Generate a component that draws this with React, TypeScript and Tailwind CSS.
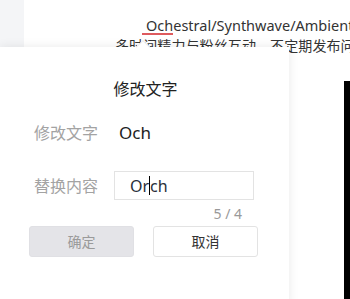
import React from 'react';

const font = { fontFamily: '"Noto Sans", "Noto Sans CJK SC", sans-serif' };

const App: React.FC = () => {
  return (
    <div className="relative w-[350px] h-[299px] overflow-hidden bg-white text-[#333]" style={font}>
      {/* page behind the popup */}
      <div className="flex h-full">
        <div className="w-[24px] h-[47px] bg-[#f4f5f7] shrink-0" />
        <div className="flex-1 relative">
          <div className="pl-[122px] pt-[14px] whitespace-nowrap text-[14.5px] leading-[22px]">
            Ochestral/Synthwave/Ambient
          </div>
          <div className="pl-[91px] whitespace-nowrap text-[14px] leading-[20px] tracking-[0.1px]">
            多时间精力与粉丝互动，不定期发布问题
          </div>
          <span className="absolute left-[118px] top-[33px] w-[31px] h-[2px] bg-[#de5a5e]" />
        </div>
      </div>
      <div className="absolute right-0 top-[81px] w-[6px] h-[220px] bg-black" />

      {/* popup */}
      <div className="absolute left-0 top-[47px] w-[289px] h-[260px] bg-white shadow-[0_0_10px_rgba(0,0,0,0.09)]">
        <span className="absolute left-[138px] top-[-5px] w-[10px] h-[10px] rotate-45 bg-white border-l border-t border-[#eceef1]" />
        <div className="flex flex-col pt-[30px]">
          <div className="text-center pl-[2px] text-[16px] leading-[24px] text-[#222]">修改文字</div>
          <div className="flex items-center h-[30px] mt-[17px] pl-[34px]">
            <span className="w-[64px] text-[16px] text-[#a3a3a3]">修改文字</span>
            <span className="ml-[21px] text-[17px] text-[#222]">Och</span>
          </div>
          <div className="flex items-center mt-[23px] pl-[34px]">
            <span className="w-[64px] text-[16px] text-[#a3a3a3]">替换内容</span>
            <div className="ml-[16px] w-[140px] h-[29px] border border-[#e3e3e3] flex items-center pl-[15px] text-[16px] text-[#2a2f3a]">
              <span>Or</span>
              <span className="inline-block w-px h-[19px] bg-black" />
              <span>ch</span>
            </div>
          </div>
          <div className="flex justify-end pr-[47px] mt-[4px] text-[14px] leading-[20px] text-[#999]">5 / 4</div>
          <div className="flex gap-[19px] pl-[29px] mt-[2px]">
            <button className="w-[105px] h-[31px] rounded-[3px] bg-[#e4e4e8] border border-[#e0e0e4] text-[14px] text-[#9a9a9a]">确定</button>
            <button className="w-[105px] h-[31px] rounded-[3px] bg-white border border-[#e3e3e3] text-[14px] text-[#333]">取消</button>
          </div>
        </div>
      </div>
    </div>
  );
};

export default App;
